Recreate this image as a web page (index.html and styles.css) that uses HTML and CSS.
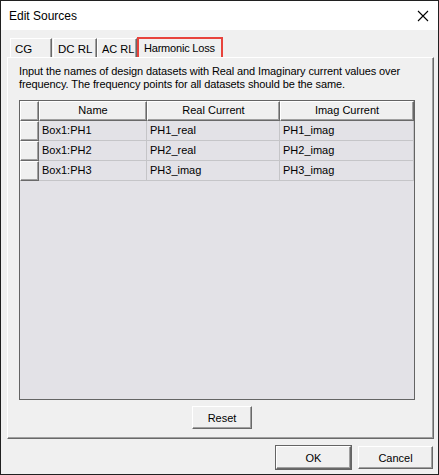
FILE: index.html
```html
<!DOCTYPE html>
<html>
<head>
<meta charset="utf-8">
<link rel="stylesheet" href="styles.css">
</head>
<body>
<div class="window">
  <div class="titlebar">
    <span class="title">Edit Sources</span>
    <svg class="close" width="12" height="12" viewBox="0 0 12 12"><path d="M1 1L11 11M11 1L1 11" stroke="#000" stroke-width="1.1" fill="none"/></svg>
  </div>
  <div class="body">
    <div class="tabs">
      <div class="tab tab-cg">CG</div>
      <div class="tab tab-dc">DC RL</div>
      <div class="tab tab-ac">AC RL</div>
      <div class="tab tab-sel">Harmonic Loss</div>
    </div>
    <div class="panel">
      <p class="desc">Input the names of design datasets with Real and Imaginary current values over frequency. The frequency points for all datasets should be the same.</p>
      <div class="grid">
        <div class="row head">
          <div class="cell rh hc"></div>
          <div class="cell hc c1">Name</div>
          <div class="cell hc c2">Real Current</div>
          <div class="cell hc c3">Imag Current</div>
        </div>
        <div class="row">
          <div class="cell rh"></div>
          <div class="cell dc c1">Box1:PH1</div>
          <div class="cell dc c2">PH1_real</div>
          <div class="cell dc c3">PH1_imag</div>
        </div>
        <div class="row">
          <div class="cell rh"></div>
          <div class="cell dc c1">Box1:PH2</div>
          <div class="cell dc c2">PH2_real</div>
          <div class="cell dc c3">PH2_imag</div>
        </div>
        <div class="row">
          <div class="cell rh"></div>
          <div class="cell dc c1">Box1:PH3</div>
          <div class="cell dc c2">PH3_imag</div>
          <div class="cell dc c3">PH3_imag</div>
        </div>
      </div>
      <div class="reset-row"><button class="btn btn-reset">Reset</button></div>
    </div>
    <div class="footer">
      <button class="btn btn-ok">OK</button>
      <button class="btn btn-cancel">Cancel</button>
    </div>
  </div>
</div>
</body>
</html>
```
FILE: styles.css
```css
html, body {
  margin: 0;
  padding: 0;
  background: #f0f0f0;
}
.window {
  width: 439px;
  height: 475px;
  box-sizing: border-box;
  border: 1px solid #202020;
  background: #f0f0f0;
  font-family: "Liberation Sans", Arial, sans-serif;
  font-size: 11px;
  color: #000;
  display: flex;
  flex-direction: column;
}
.titlebar {
  height: 29px;
  background: #fff;
  display: flex;
  align-items: center;
  justify-content: space-between;
  padding: 0 9px 0 8px;
}
.title {
  font-size: 12px;
}
.close {
  display: block;
  margin-top: 1px;
}
.body {
  flex: 1;
  display: flex;
  flex-direction: column;
  padding: 0 4px 0 6px;
}
.tabs {
  display: flex;
  align-items: flex-end;
  height: 27px;
  padding-left: 3px;
}
.tab {
  box-sizing: border-box;
  height: 19px;
  border-top: 1px solid #fff;
  border-left: 1px solid #fff;
  border-right: 1px solid #696969;
  box-shadow: inset -1px 0 0 #a0a0a0;
  padding: 3px 0 0 4px;
  font-size: 11.5px;
  line-height: 14px;
  white-space: nowrap;
}
.tab-cg { width: 42px; }
.tab-dc { width: 44px; margin-left: 1px; }
.tab-ac { width: 40px; font-size: 11px; }
.tab-sel {
  width: 86px;
  height: 20px;
  padding: 2px 0 0 5px;
  background: #f0f0f0;
  border: 2px solid #e8433c;
  border-bottom: none;
  box-shadow: none;
  font-size: 11px;
  letter-spacing: -0.2px;
}
.panel {
  box-sizing: border-box;
  height: 382px;
  border-top: 1px solid #fff;
  border-left: 1px solid #fff;
  border-right: 1px solid #696969;
  border-bottom: 1px solid #696969;
  box-shadow: inset -1px -1px 0 #a0a0a0;
  padding: 7px 0 0 11px;
  display: flex;
  flex-direction: column;
}
.desc {
  margin: 0;
  line-height: 13px;
  width: 400px;
  font-size: 11px;
  letter-spacing: -0.1px;
}
.grid {
  margin-top: 9px;
  box-sizing: border-box;
  width: 396px;
  height: 300px;
  border: 1px solid #646464;
  background: #e3e2e7;
  display: flex;
  flex-direction: column;
}
.row {
  display: flex;
  height: 20px;
}
.cell {
  box-sizing: border-box;
  height: 100%;
  line-height: 19px;
  white-space: nowrap;
  overflow: hidden;
}
.rh { width: 19px; }
.c1 { width: 108px; }
.c2 { width: 133px; }
.c3 { width: 134px; }
.hc, .rh {
  background: #f0f0f0;
  border-top: 1px solid #fff;
  border-left: 1px solid #fff;
  border-right: 1px solid #696969;
  border-bottom: 1px solid #696969;
  box-shadow: inset -1px -1px 0 #a0a0a0;
}
.hc {
  text-align: center;
  line-height: 17px;
}
.dc {
  background: #e3e2e7;
  border-right: 1px solid #c5c5c8;
  border-bottom: 1px solid #c5c5c8;
  padding-left: 3px;
}
.reset-row {
  display: flex;
  padding-left: 173px;
  margin-top: 6px;
}
.btn {
  box-sizing: border-box;
  font-family: "Liberation Sans", Arial, sans-serif;
  font-size: 11px;
  color: #000;
  background: #f0f0f0;
  border-top: 1px solid #fff;
  border-left: 1px solid #fff;
  border-right: 1px solid #696969;
  border-bottom: 1px solid #696969;
  box-shadow: inset -1px -1px 0 #a0a0a0;
  padding: 0;
  margin: 0;
}
.btn-reset {
  width: 60px;
  height: 23px;
}
.footer {
  display: flex;
  justify-content: flex-end;
  gap: 7px;
  margin-top: 7px;
  padding-right: 1px;
}
.btn-ok {
  width: 75px;
  height: 23px;
  outline: 1px solid #646464;
}
.btn-cancel {
  width: 75px;
  height: 23px;
}
```
